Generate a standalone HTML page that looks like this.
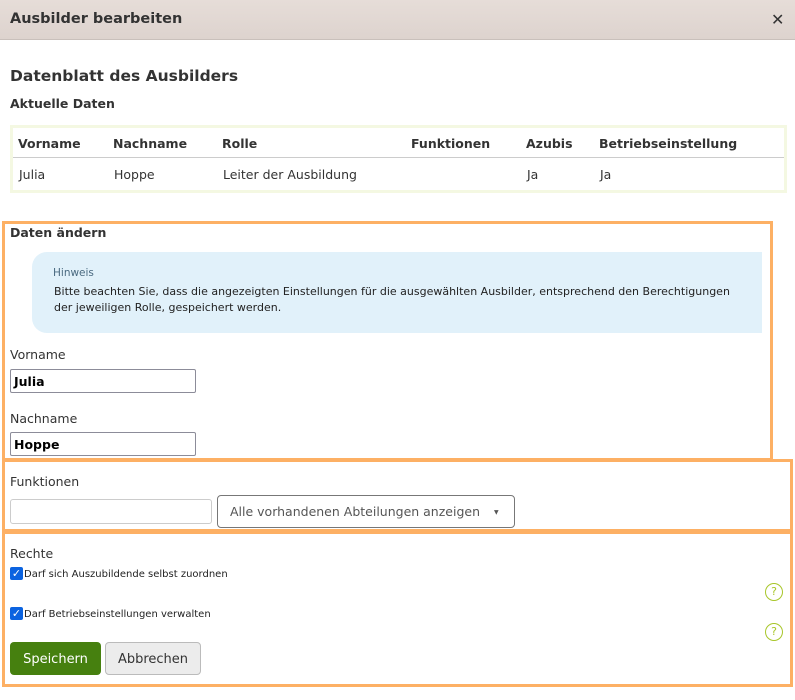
<!DOCTYPE html>
<html><head><meta charset="utf-8"><style>
*{margin:0;padding:0;box-sizing:border-box}
body{width:795px;height:700px;background:#fff;font-family:"DejaVu Sans","Liberation Sans",sans-serif;color:#222;position:relative;overflow:hidden}
.a{position:absolute;white-space:nowrap}
.hdr{left:0;top:0;width:795px;height:40px;background:linear-gradient(#e6ddd8,#ddd3ce);border-bottom:1px solid #c9c0bb}
.ob{position:absolute;border:3px solid #fdb064}
.inp{position:absolute;border:1px solid #8c8c99;border-radius:2px;background:#fff;font-size:12.5px;font-weight:bold;padding:4px 0 0 3px;color:#000}
</style></head><body>
<div class="a hdr"></div>
<div class="a" style="left:10px;top:11px;font-size:14.5px;font-weight:bold;color:#333">Ausbilder bearbeiten</div>
<div class="a" style="left:771px;top:10px;font-size:16px;font-weight:bold;color:#333">✕</div>

<div class="a" style="left:10px;top:67px;font-size:15.5px;font-weight:bold;color:#333">Datenblatt des Ausbilders</div>
<div class="a" style="left:10px;top:96px;font-size:12.5px;font-weight:bold;color:#333">Aktuelle Daten</div>

<div class="a" style="left:10px;top:125px;width:777px;height:68px;border:3px solid #f4f8e2"></div>
<div class="a" style="left:13px;top:157px;width:771px;height:1px;background:#ccc"></div>
<div class="a" style="left:18px;top:136px;font-size:12.5px;font-weight:bold;color:#333">Vorname</div>
<div class="a" style="left:113px;top:136px;font-size:12.5px;font-weight:bold;color:#333">Nachname</div>
<div class="a" style="left:222px;top:136px;font-size:12.5px;font-weight:bold;color:#333">Rolle</div>
<div class="a" style="left:411px;top:136px;font-size:12.5px;font-weight:bold;color:#333">Funktionen</div>
<div class="a" style="left:526px;top:136px;font-size:12.5px;font-weight:bold;color:#333">Azubis</div>
<div class="a" style="left:599px;top:136px;font-size:12.5px;font-weight:bold;color:#333">Betriebseinstellung</div>
<div class="a" style="left:19px;top:167px;font-size:12.5px;color:#333">Julia</div>
<div class="a" style="left:114px;top:167px;font-size:12.5px;color:#333">Hoppe</div>
<div class="a" style="left:223px;top:167px;font-size:12.5px;color:#333">Leiter der Ausbildung</div>
<div class="a" style="left:527px;top:167px;font-size:12.5px;color:#333">Ja</div>
<div class="a" style="left:600px;top:167px;font-size:12.5px;color:#333">Ja</div>

<div class="ob" style="left:2px;top:221px;width:771px;height:240px"></div>
<div class="ob" style="left:2px;top:459px;width:791px;height:73px"></div>
<div class="ob" style="left:2px;top:531px;width:791px;height:156px"></div>

<div class="a" style="left:10px;top:225px;font-size:12.5px;font-weight:bold;color:#333">Daten ändern</div>
<div class="a" style="left:32px;top:252px;width:730px;height:81px;background:#e1f1fa;border-radius:15px 0 0 15px"></div>
<div class="a" style="left:53px;top:267px;font-size:10.5px;color:#4a6a80">Hinweis</div>
<div class="a" style="left:54px;top:284px;font-size:11px;line-height:16px;color:#222">Bitte beachten Sie, dass die angezeigten Einstellungen für die ausgewählten Ausbilder, entsprechend den Berechtigungen<br>der jeweiligen Rolle, gespeichert werden.</div>

<div class="a" style="left:10px;top:347px;font-size:12.5px;color:#333">Vorname</div>
<div class="inp" style="left:10px;top:369px;width:186px;height:24px">Julia</div>
<div class="a" style="left:10px;top:411px;font-size:12.5px;color:#333">Nachname</div>
<div class="inp" style="left:10px;top:432px;width:186px;height:24px">Hoppe</div>

<div class="a" style="left:10px;top:474px;font-size:12.5px;color:#333">Funktionen</div>
<div class="a" style="left:10px;top:499px;width:202px;height:25px;border:1px solid #ccc;border-radius:3px"></div>
<div class="a" style="left:217px;top:495px;height:33px;border:1px solid #777;border-radius:4px;width:298px"></div>
<div class="a" style="left:230px;top:504px;font-size:12.5px;color:#555">Alle vorhandenen Abteilungen anzeigen</div>
<div class="a" style="left:494px;top:509px;font-size:6px;color:#555">▼</div>

<div class="a" style="left:10px;top:546px;font-size:12.5px;color:#333">Rechte</div>
<div class="a" style="left:10px;top:567px;width:13px;height:13px;background:#0b63e0;border-radius:2px;color:#fff;font-size:11px;line-height:13px;text-align:center">✓</div>
<div class="a" style="left:24px;top:569px;font-size:10px;color:#222">Darf sich Auszubildende selbst zuordnen</div>
<div class="a" style="left:10px;top:607px;width:13px;height:13px;background:#0b63e0;border-radius:2px;color:#fff;font-size:11px;line-height:13px;text-align:center">✓</div>
<div class="a" style="left:24px;top:609px;font-size:10px;color:#222">Darf Betriebseinstellungen verwalten</div>
<div class="a" style="left:765px;top:583px;width:18px;height:18px;border:1.5px solid #a8c62a;border-radius:50%;color:#a8c62a;font-size:11px;line-height:15px;text-align:center">?</div>
<div class="a" style="left:765px;top:623px;width:18px;height:18px;border:1.5px solid #a8c62a;border-radius:50%;color:#a8c62a;font-size:11px;line-height:15px;text-align:center">?</div>

<div class="a" style="left:10px;top:642px;width:91px;height:33px;background:#46800f;border-radius:4px;color:#fff;font-size:13px;line-height:36px;text-align:center">Speichern</div>
<div class="a" style="left:105px;top:642px;width:96px;height:33px;background:#ececec;border:1px solid #bbb;border-radius:4px;color:#333;font-size:13px;line-height:34px;text-align:center">Abbrechen</div>
</body></html>
